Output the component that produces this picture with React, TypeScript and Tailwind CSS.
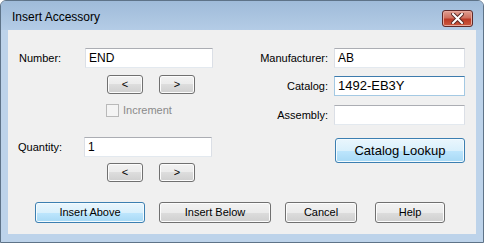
const FONT = "font-['Liberation_Sans',Arial,sans-serif]";

const BTN =
  "flex items-center justify-center rounded-[3px] border border-[#707070] bg-[linear-gradient(#f2f2f2_0%,#ebebeb_50%,#dddddd_50%,#cfcfcf_100%)] shadow-[inset_0_0_0_1px_#fcfcfc] text-[11px] text-black";
const BTN_BLUE =
  "flex items-center justify-center rounded-[3px] border border-[#3c7fb1] bg-[linear-gradient(#eaf6fd_0%,#d9f0fc_50%,#bee6fd_50%,#a7d9f5_100%)] shadow-[inset_0_0_0_1px_#f4fbfe] text-black";

function TextBox({
  value = "",
  focused = false,
  big = false,
  w = "w-[128px]",
}: {
  value?: string;
  focused?: boolean;
  big?: boolean;
  w?: string;
}) {
  return (
    <div
      className={`${w} h-[20px] border bg-white px-[3px] flex items-center ${
        focused
          ? "border-[#a4c9e3] border-t-[#3d7bad]"
          : "border-[#dbdfe6] border-t-[#abadb3] border-b-[#e3e9ef]"
      } ${big ? "text-[13px]" : "text-[12px]"} text-black`}
    >
      {value}
    </div>
  );
}

function ArrowPair({ className = "" }: { className?: string }) {
  return (
    <div className={`flex gap-[16px] ${className}`}>
      <button className={`${BTN} w-[36px] h-[19px]`}>&lt;</button>
      <button className={`${BTN} w-[36px] h-[19px]`}>&gt;</button>
    </div>
  );
}

export default function App() {
  return (
    <div
      className={`${FONT} w-[484px] h-[243px] flex flex-col rounded-t-[6px] border border-[#5e7388] bg-[#bdd3ea] overflow-hidden`}
    >
      {/* title bar */}
      <div className="h-[29px] shrink-0 flex items-center justify-between pl-[11px] pr-[10px] bg-[linear-gradient(#9fbbd9,#b4cce6)]">
        <span className="text-[12px] text-black pt-[3px]">Insert Accessory</span>
        <div className="mt-[6px] w-[31px] h-[17px] rounded-[3px] border border-[#5e2a2a] bg-[linear-gradient(#e0a093_0%,#d0705f_45%,#bb3a26_55%,#cc5a40_100%)] shadow-[inset_0_0_0_1px_#e8a89c] flex items-center justify-center">
          <svg width="13" height="11" viewBox="0 0 13 11">
            <path
              d="M2 1 L11 10 M11 1 L2 10"
              stroke="#5a2a26"
              strokeWidth="4"
              strokeLinecap="square"
            />
            <path
              d="M2 1 L11 10 M11 1 L2 10"
              stroke="#ffffff"
              strokeWidth="2"
              strokeLinecap="square"
            />
          </svg>
        </div>
      </div>

      {/* client area */}
      <div className="mx-[7px] h-[204px] bg-[#f0f0f0] flex flex-col text-[11px] text-black">
        <div className="flex">
          {/* left column */}
          <div className="w-[220px] pl-[11px]">
            <div className="mt-[18px] flex items-center">
              <span className="w-[66px]">Number:</span>
              <TextBox value="END" />
            </div>
            <ArrowPair className="mt-[7px] ml-[88px]" />
            <div className="mt-[10px] ml-[87px] flex items-center gap-[4px] leading-[13px] text-[#8a8a8a]">
              <div className="w-[13px] h-[13px] border border-[#b9b9b9] bg-[#f4f4f4]" />
              <span>Increment</span>
            </div>
            <div className="mt-[20px] flex items-center">
              <span className="w-[66px] -ml-[1px]">Quantity:</span>
              <TextBox value="1" />
            </div>
            <ArrowPair className="mt-[6px] ml-[88px]" />
          </div>

          {/* right column */}
          <div className="flex-1 flex flex-col items-end pr-[11px]">
            <div className="mt-[18px] flex items-center gap-[6px]">
              <span>Manufacturer:</span>
              <TextBox value="AB" w="w-[131px]" />
            </div>
            <div className="mt-[8px] flex items-center gap-[6px]">
              <span>Catalog:</span>
              <TextBox value="1492-EB3Y" focused big w="w-[131px]" />
            </div>
            <div className="mt-[9px] flex items-center gap-[6px]">
              <span>Assembly:</span>
              <TextBox w="w-[131px]" />
            </div>
            <button
              className={`${BTN_BLUE} mt-[13px] w-[130px] h-[25px] text-[13px] shadow-[0_0_2px_#6ec3f0,inset_0_0_0_1px_#f4fbfe]`}
            >
              Catalog Lookup
            </button>
          </div>
        </div>

        {/* bottom buttons */}
        <div className="mt-[20px] pl-[27px] flex items-center">
          <button className={`${BTN_BLUE} w-[110px] h-[21px] text-[11px]`}>
            Insert Above
          </button>
          <button className={`${BTN} ml-[14px] w-[112px] h-[21px]`}>
            Insert Below
          </button>
          <button className={`${BTN} ml-[14px] w-[72px] h-[21px]`}>
            Cancel
          </button>
          <button className={`${BTN} ml-[18px] w-[70px] h-[21px]`}>Help</button>
        </div>
      </div>
    </div>
  );
}
